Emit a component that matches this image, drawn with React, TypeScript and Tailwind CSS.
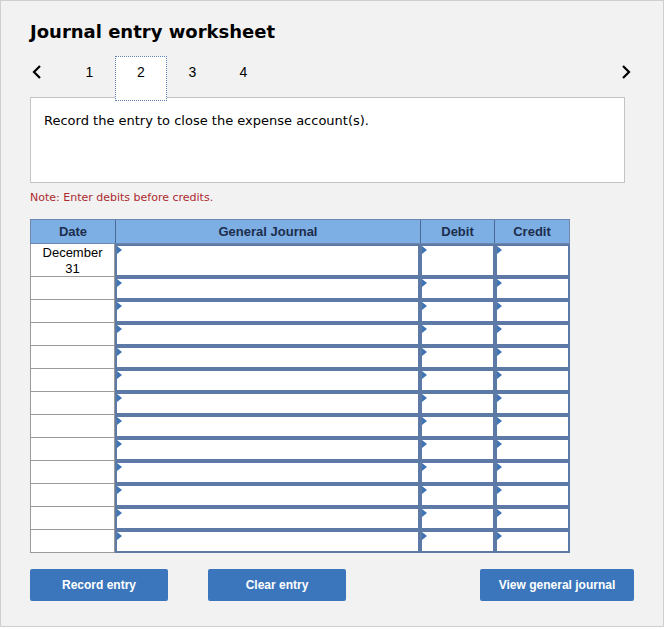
import React from "react";

const rows = 13;

function Marker() {
  return (
    <span className="absolute left-0 top-0 h-0 w-0 border-y-[4px] border-l-[5px] border-y-transparent border-l-[#3f74b5]" />
  );
}

function InputCell({ className }: { className: string }) {
  return (
    <div className={`relative border-2 border-[#5d7aa6] bg-white ${className}`}>
      <Marker />
    </div>
  );
}

function Chevron({ dir }: { dir: "left" | "right" }) {
  return (
    <svg width="10" height="16" viewBox="0 0 10 16" className="text-black">
      <path
        d={dir === "left" ? "M8 2 L2 8 L8 14" : "M2 2 L8 8 L2 14"}
        fill="none"
        stroke="currentColor"
        strokeWidth="2.2"
      />
    </svg>
  );
}

export default function App() {
  return (
    <div className="h-[629px] w-[667px] bg-white font-['Liberation_Sans',Arial,sans-serif]">
      <div className="h-[627px] w-[664px] border border-[#cfcfcf] bg-[#f2f2f2] pl-[29px] pr-[29px] pt-[19px]">
        <h1 className="font-['DejaVu_Sans',Verdana,sans-serif] text-[18px] font-bold leading-[24px] text-black">
          Journal entry worksheet
        </h1>

        <div className="relative z-10 mt-[12px] flex h-[44px] items-start">
          <div className="flex h-[32px] w-[20px] items-center pl-[2px]">
            <Chevron dir="left" />
          </div>
          <div className="ml-[14px] flex items-start text-[14px] leading-[32px] text-black">
            <span className="w-[51px] text-center">1</span>
            <span className="h-[45px] w-[52px] border border-dotted border-[#5b7fb8] bg-white text-center leading-[30px]">
              2
            </span>
            <span className="w-[51px] text-center">3</span>
            <span className="w-[51px] text-center">4</span>
          </div>
          <div className="ml-auto flex h-[32px] items-center pr-[3px]">
            <Chevron dir="right" />
          </div>
        </div>

        <div className="-mt-[3px] h-[86px] w-[595px] border border-[#c4c4c4] bg-white px-[13px] pt-[13px] font-['DejaVu_Sans',Verdana,sans-serif] text-[13px] text-black">
          Record the entry to close the expense account(s).
        </div>

        <p className="mt-[7px] font-['DejaVu_Sans',Verdana,sans-serif] text-[11px] leading-[16px] text-[#ad2a2f]">
          Note: Enter debits before credits.
        </p>

        <div className="mt-[13px] w-[540px]">
          <div className="flex h-[25px] border border-[#6d86ad] bg-[#7daee4] text-[13px] font-bold text-[#1c2d4d]">
            <div className="flex w-[85px] items-center justify-center border-r border-[#4d6a96]">Date</div>
            <div className="flex w-[305px] items-center justify-center border-r border-[#4d6a96]">General Journal</div>
            <div className="flex w-[74px] items-center justify-center border-r border-[#4d6a96]">Debit</div>
            <div className="flex flex-1 items-center justify-center">Credit</div>
          </div>
          {Array.from({ length: rows }).map((_, i) => (
            <div key={i} className={`flex ${i === 0 ? "h-[33px]" : "h-[23px]"}`}>
              <div className="w-[85px] border border-t-0 border-[#9a9a9a] bg-white pt-[1px] text-center text-[13px] leading-[16px] text-black">
                {i === 0 ? (
                  <>
                    December
                    <br />
                    31
                  </>
                ) : null}
              </div>
              <InputCell className="w-[305px]" />
              <InputCell className="w-[75px]" />
              <InputCell className="w-[75px]" />
            </div>
          ))}
        </div>

        <div className="mt-[16px] flex h-[32px] text-[12px] font-bold text-white">
          <button className="h-[32px] w-[138px] rounded-[2px] bg-[#3b76bc]">Record entry</button>
          <button className="ml-[40px] h-[32px] w-[138px] rounded-[2px] bg-[#3b76bc]">Clear entry</button>
          <button className="ml-auto h-[32px] w-[154px] rounded-[2px] bg-[#3b76bc]">View general journal</button>
        </div>
      </div>
    </div>
  );
}
